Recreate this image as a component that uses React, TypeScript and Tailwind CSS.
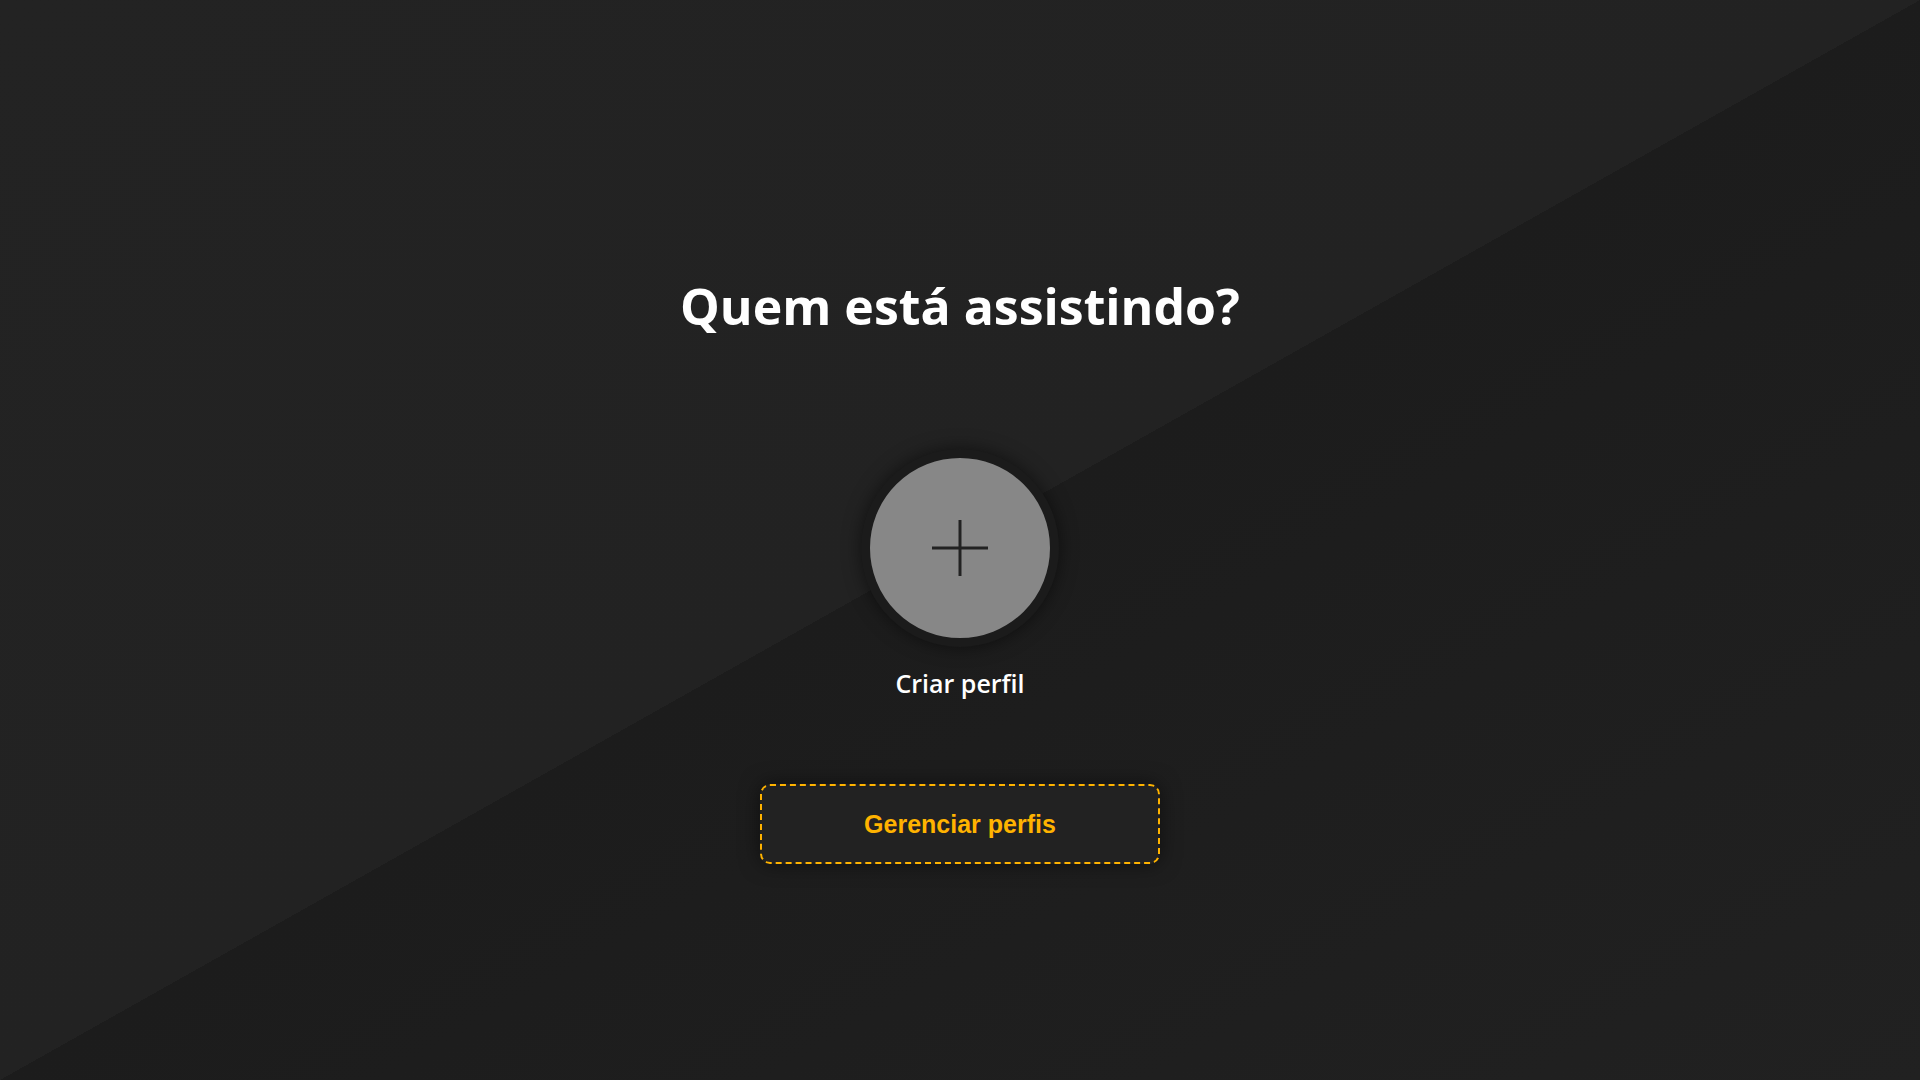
import React from 'react';

const PlusIcon: React.FC = () => (
  <svg width="58" height="58" viewBox="0 0 58 58" fill="none">
    <line x1="1" y1="29" x2="57" y2="29" stroke="#222222" strokeWidth="3" />
    <line x1="29" y1="1" x2="29" y2="57" stroke="#222222" strokeWidth="3" />
  </svg>
);

const App: React.FC = () => (
  <div className="min-h-screen w-full flex flex-col items-center bg-[linear-gradient(to_bottom_right,#232323_0%,#222222_50%,#1c1c1c_50%,#212121_100%)] font-['Open_Sans',sans-serif]">
    <h1 className="mt-[270px] text-[50px] leading-[72px] font-bold text-white">Quem está assistindo?</h1>

    <button className="mt-[107px] flex flex-col items-center">
      <div className="w-[198px] h-[198px] rounded-full border-[9px] border-[#1b1b1b] bg-[#878787] flex items-center justify-center shadow-[0_0_18px_rgba(0,0,0,0.5)]">
        <PlusIcon />
      </div>
      <span className="mt-[20px] text-[25px] leading-[32px] font-semibold text-white">Criar perfil</span>
    </button>

    <button className="mt-[85px] w-[400px] h-[80px] rounded-[10px] border-2 border-dashed border-[#ffb300] bg-[#222222] shadow-[0_0_20px_rgba(0,0,0,0.5)] flex items-center justify-center">
      <span className="mt-[2px] font-['Liberation_Sans',Arial,sans-serif] text-[25px] font-bold text-[#ffb300]">Gerenciar perfis</span>
    </button>
  </div>
);

export default App;
